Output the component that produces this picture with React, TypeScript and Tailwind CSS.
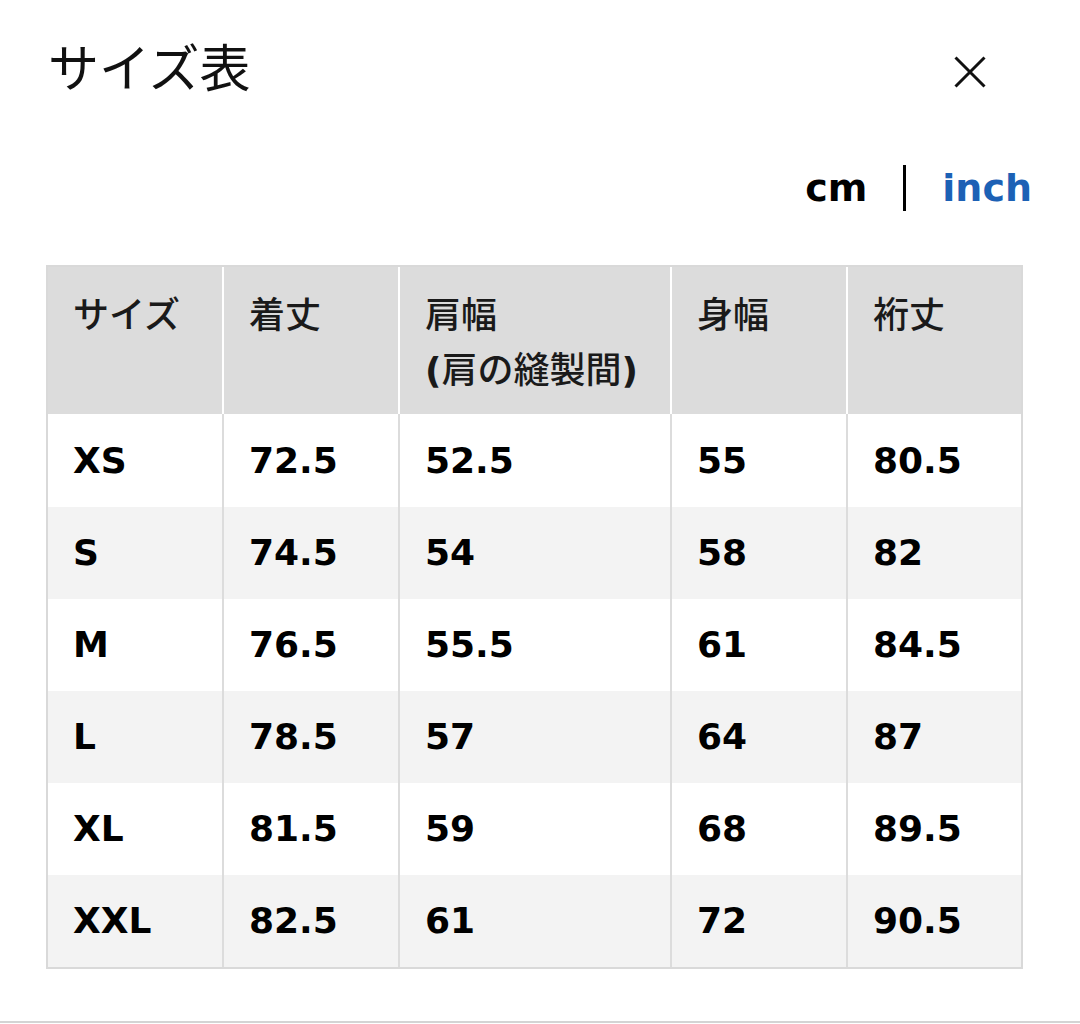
const jp = { fontFamily: '"Noto Sans CJK JP", "Noto Sans", sans-serif' }
const num = { fontFamily: '"DejaVu Sans", "Liberation Sans", sans-serif' }

const rows = [
  ['XS', '72.5', '52.5', '55', '80.5'],
  ['S', '74.5', '54', '58', '82'],
  ['M', '76.5', '55.5', '61', '84.5'],
  ['L', '78.5', '57', '64', '87'],
  ['XL', '81.5', '59', '68', '89.5'],
  ['XXL', '82.5', '61', '72', '90.5'],
]

const cols = 'grid grid-cols-[174px_176px_272px_176px_175px]'

export default function App() {
  return (
    <div className="flex h-[1024px] w-[1080px] flex-col overflow-hidden bg-white text-[#111]">
      {/* Title bar */}
      <div className="flex items-start justify-between pl-[48px] pr-[80px] pt-[35px]">
        <h1 className="mt-[5px] text-[51px] font-normal leading-[50px]" style={jp}>
          サイズ表
        </h1>
        <button className="mt-[7px] flex h-[60px] w-[60px] items-center justify-center" aria-label="close">
          <svg width="32" height="32" viewBox="0 0 32 32" fill="none">
            <path d="M1.5 1.5 L30.5 30.5 M30.5 1.5 L1.5 30.5" stroke="#111" strokeWidth="3" />
          </svg>
        </button>
      </div>

      {/* Unit toggle */}
      <div className="mt-[63px] flex items-center justify-end gap-[36px] pr-[48px]" style={num}>
        <span className="text-[38px] font-bold leading-none text-black">cm</span>
        <span className="h-[46px] w-[3px] bg-black" />
        <span className="text-[38px] font-bold leading-none text-[#1c61b5]">inch</span>
      </div>

      {/* Table */}
      <div className="ml-[46px] mt-[54px] w-[977px] border-2 border-[#d9d9d9]">
        <div
          className={`${cols} h-[147px] bg-[#dcdcdc] text-[36px] font-medium leading-[55px] text-[#1a1a1a]`}
          style={jp}
        >
          <div className="pl-[25px] pt-[18px]">サイズ</div>
          <div className="border-l-2 border-white pl-[25px] pt-[18px]">着丈</div>
          <div className="border-l-2 border-white pl-[25px] pt-[18px]">
            肩幅
            <br />
            <span className="font-bold" style={num}>(</span>肩の縫製間<span className="font-bold" style={num}>)</span>
          </div>
          <div className="border-l-2 border-white pl-[25px] pt-[18px]">身幅</div>
          <div className="border-l-2 border-white pl-[25px] pt-[18px]">裄丈</div>
        </div>
        {rows.map((r, i) => (
          <div
            key={r[0]}
            className={`${cols} ${i === 0 ? 'h-[93px]' : 'h-[92px]'} ${i % 2 === 1 ? 'bg-[#f3f3f3]' : 'bg-white'} text-[36px] font-bold text-black`}
            style={num}
          >
            {r.map((c, j) => (
              <div
                key={j}
                className={`flex items-center pl-[25px] ${j > 0 ? 'border-l-2 border-[#dcdcdc]' : ''}`}
              >
                {c}
              </div>
            ))}
          </div>
        ))}
      </div>

      <div className="mt-[52px] h-[2px] w-full bg-[#d4d4d4]" />
    </div>
  )
}
